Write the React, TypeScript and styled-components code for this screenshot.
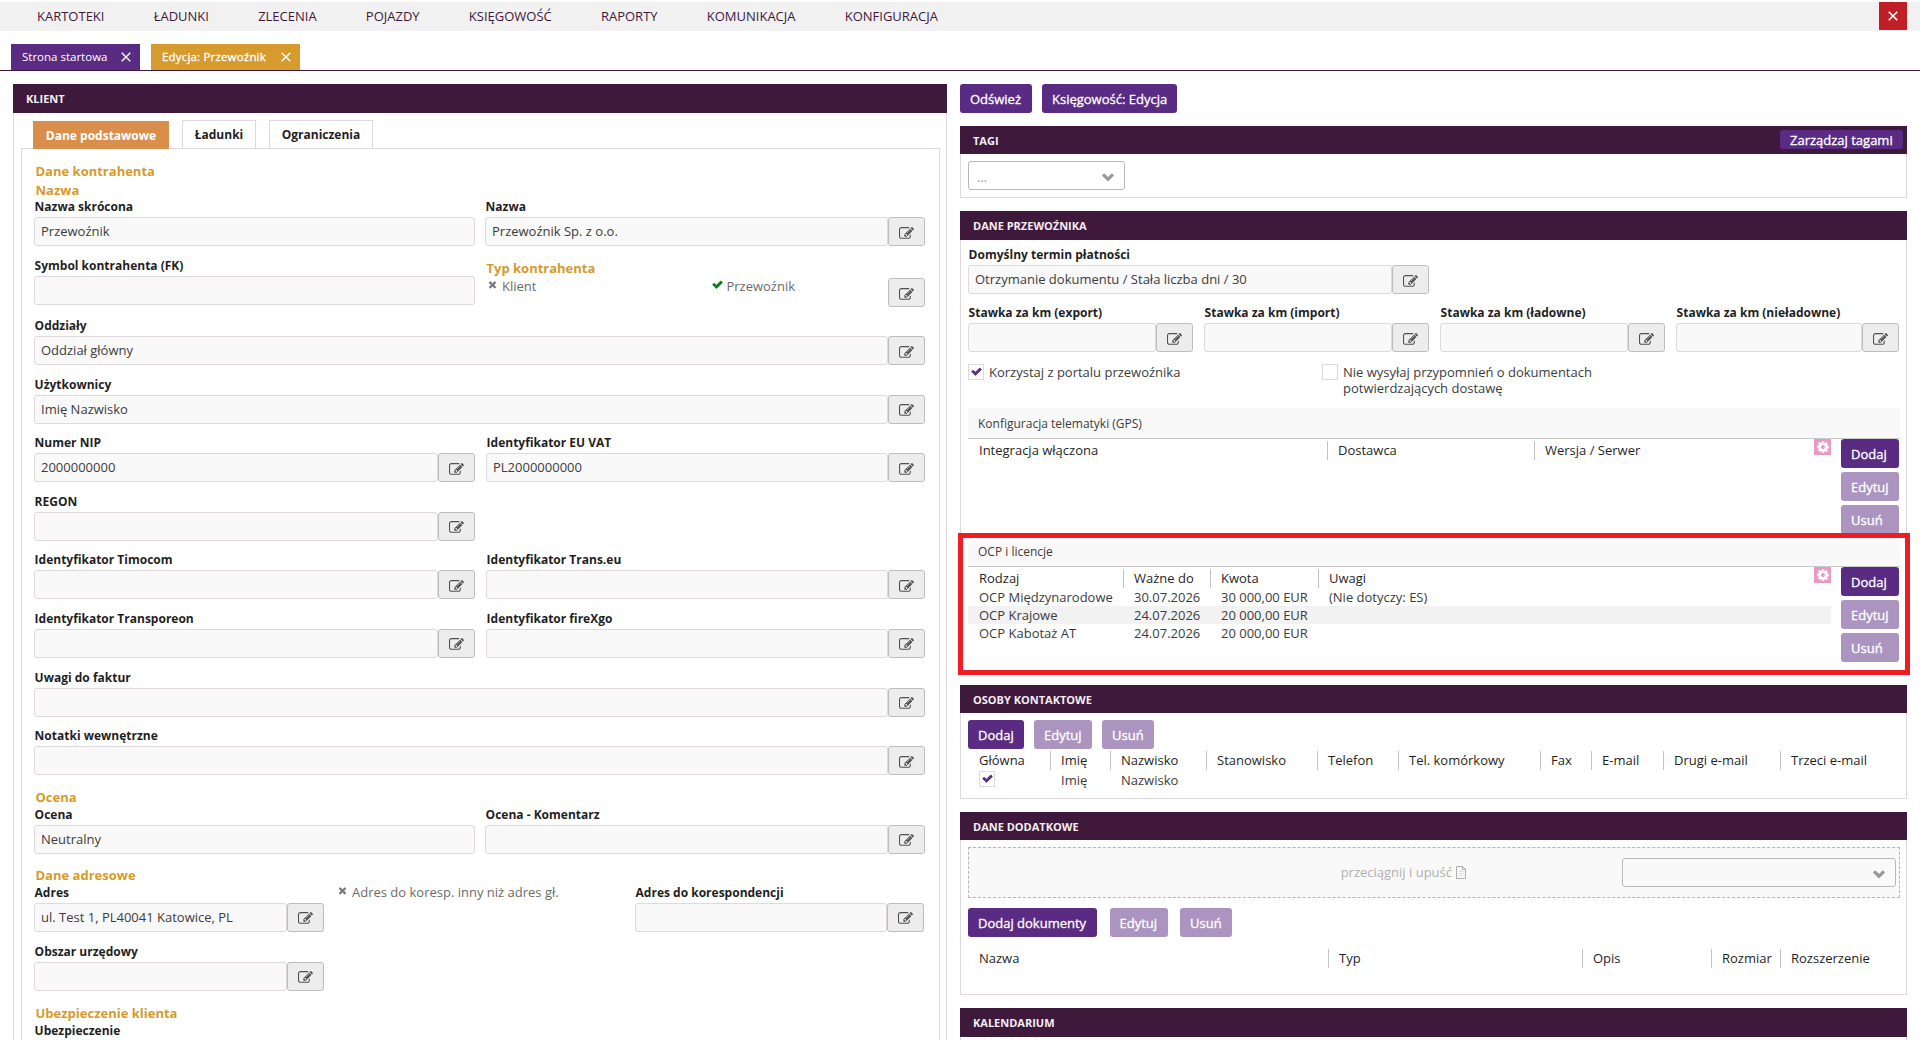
import React from "react";
import styled, { createGlobalStyle, css } from "styled-components";

const color = {
  plum: "#3f193c",
  violet: "#5a2b82",
  violetOff: "#ab95c0",
  gold: "#d69a2d",
  line: "#dfd8dc",
  field: "#f9f9f9",
  text: "#3c3c3c",
  strong: "#1f1f1f",
};

const GlobalStyle = createGlobalStyle`
  * { box-sizing: border-box; }
  body {
    margin: 0;
    background: #fff;
    color: ${color.text};
    font: 13px/18px "Open Sans", "Noto Sans", sans-serif;
  }
  button { font: inherit; border: 0; padding: 0; margin: 0; cursor: pointer; }
`;

/* ---------- icons ---------- */

const paths = {
  edit: "M888 1184l116-116-152-152-116 116v56h96v96h56zm440-720q-16-16-33 1l-350 350q-17 17-1 33t33-1l350-350q17-17 1-33zm80 594v190q0 119-84.5 203.5t-203.5 84.5h-832q-119 0-203.5-84.5t-84.5-203.5v-832q0-119 84.5-203.5t203.5-84.5h832q63 0 117 25 15 7 18 23 3 17-9 29l-49 49q-14 14-32 8-23-6-45-6h-832q-66 0-113 47t-47 113v832q0 66 47 113t113 47h832q66 0 113-47t47-113v-126q0-13 9-22l64-64q15-15 35-7t20 29zm-96-738l288 288-672 672h-288v-288zm444 132l-92 92-288-288 92-92q28-28 68-28t68 28l152 152q28 28 28 68t-28 68z",
  check: "M1671 566q0 40-28 68l-724 724-136 136q-28 28-68 28t-68-28l-136-136-362-362q-28-28-28-68t28-68l136-136q28-28 68-28t68 28l294 295 656-657q28-28 68-28t68 28l136 136q28 28 28 68z",
  times: "M1490 1322q0 40-28 68l-136 136q-28 28-68 28t-68-28l-294-294-294 294q-28 28-68 28t-68-28l-136-136q-28-28-28-68t28-68l294-294-294-294q-28-28-28-68t28-68l136-136q28-28 68-28t68 28l294 294 294-294q28-28 68-28t68 28l136 136q28 28 28 68t-28 68l-294 294 294 294q28 28 28 68z",
  cog: "M1152 896q0-106-75-181t-181-75-181 75-75 181 75 181 181 75 181-75 75-181zm512-109v222q0 12-8 23t-20 13l-185 28q-19 54-39 91 35 50 107 138 10 12 10 25t-9 23q-27 37-99 108t-94 71q-12 0-26-9l-138-108q-44 23-91 38-16 136-29 186-7 28-36 28h-222q-14 0-24.500-8.500t-11.500-21.500l-28-184q-49-16-90-37l-141 107q-10 9-25 9-14 0-25-11-126-114-165-168-7-10-7-23 0-12 8-23 15-21 51-66.500t54-70.500q-27-50-41-99l-183-27q-13-2-21-12.500t-8-23.500v-222q0-12 8-23t19-13l186-28q14-46 39-92-40-57-107-138-10-12-10-24 0-10 9-23 26-36 98.500-107.500t94.500-71.500q13 0 26 10l138 107q44-23 91-38 16-136 29-186 7-28 36-28h222q14 0 24.500 8.500t11.500 21.500l28 184q49 16 90 37l142-107q9-9 24-9 13 0 25 10 129 119 165 170 7 8 7 22 0 12-8 23-15 21-51 66.500t-54 70.500q26 50 41 98l183 28q13 2 21 12.500t8 23.500z",
};

const Glyph = styled.svg`
  display: block;
  flex: none;
  fill: currentColor;
  stroke: currentColor;
`;

const Icon = ({ name, size, weight = 0 }: { name: keyof typeof paths; size: number; weight?: number }) => (
  <Glyph width={size} height={size} viewBox="0 0 1792 1792" strokeWidth={weight}>
    <path d={paths[name]} />
  </Glyph>
);

const LineGlyph = styled.svg`
  display: block;
  flex: none;
  fill: none;
  stroke: currentColor;
`;

const Cross = ({ size, weight = 1.6 }: { size: number; weight?: number }) => (
  <LineGlyph width={size} height={size} viewBox="0 0 10 10" strokeWidth={weight}>
    <path d="M0.7 0.7L9.3 9.3M9.3 0.7L0.7 9.3" />
  </LineGlyph>
);

const Chevron = () => (
  <LineGlyph width="14" height="10" viewBox="0 0 14 10" strokeWidth="3.2">
    <path d="M2 2.300L7 7.200L12 2.300" />
  </LineGlyph>
);

const Sheet = () => (
  <LineGlyph width="10" height="13" viewBox="0 0 10 13" strokeWidth="1">
    <path d="M0.500 0.500H6.500L9.500 3.500V12.500H0.500ZM6.500 0.500V3.500H9.500" />
    <path d="M2.500 5.500H7.500M2.500 7.500H7.500M2.500 9.500H7.500" opacity="0.35" />
  </LineGlyph>
);

/* ---------- page frame ---------- */

const Page = styled.div`
  display: flex;
  flex-direction: column;
  width: 1920px;
  height: 1040px;
  overflow: hidden;
`;

const MenuBar = styled.nav`
  display: flex;
  flex: none;
  justify-content: space-between;
  height: 29px;
  margin-top: 2px;
  padding: 0 13px 0 37px;
  background: #f1f1f1;
  color: ${color.plum};
`;

const MenuItems = styled.div`
  display: flex;
  gap: 49.2px;
  line-height: 28px;
`;

const CloseApp = styled.button`
  display: flex;
  align-items: center;
  justify-content: center;
  width: 28px;
  height: 28px;
  background: #c01f28;
  color: #fff;
`;

const PageTabs = styled.div`
  display: flex;
  flex: none;
  align-items: flex-end;
  gap: 11px;
  height: 40px;
  padding-left: 11px;
  border-bottom: 1px solid ${color.plum};
`;

const PageTab = styled.div<{ $current?: boolean; $width: number }>`
  display: flex;
  align-items: center;
  justify-content: space-between;
  width: ${(p) => p.$width}px;
  height: 26px;
  padding: 0 9px 0 11px;
  background: ${(p) => (p.$current ? color.gold : color.violet)};
  color: #fff;
  font-size: 11.5px;
  ${(p) => p.$current && "letter-spacing: 0.18px; -webkit-text-stroke: 0.3px #fff;"}
`;

const Columns = styled.main`
  display: flex;
  flex: none;
  gap: 13px;
  padding: 13px 0 0 13px;
`;

const Column = styled.div<{ $width: number }>`
  display: flex;
  flex-direction: column;
  gap: 13px;
  width: ${(p) => p.$width}px;
`;

const Panel = styled.section<{ $height: number }>`
  position: relative;
  display: flex;
  flex-direction: column;
  flex: none;
  height: ${(p) => p.$height}px;
`;

const PanelHeader = styled.header<{ $height?: number }>`
  display: flex;
  flex: none;
  align-items: center;
  justify-content: space-between;
  height: ${(p) => p.$height ?? 28}px;
  padding: 1px 4px 0 13px;
  background: ${color.plum};
  color: #f4eef3;
  font-size: 11px;
  font-weight: 700;
  line-height: 28px;
`;

const PanelBody = styled.div<{ $pad?: string }>`
  flex: 1;
  min-height: 0;
  padding: ${(p) => p.$pad ?? "7px 6px 0 7px"};
  border: 1px solid ${color.line};
  border-top: 0;
`;

/* ---------- controls ---------- */

const Button = styled.button<{ $off?: boolean; $width?: number; $height?: number }>`
  width: ${(p) => (p.$width ? p.$width + "px" : "auto")};
  height: ${(p) => p.$height ?? 29}px;
  padding: 1px 0 0 10px;
  border-radius: 3px;
  background: ${(p) => (p.$off ? color.violetOff : color.violet)};
  color: #fff;
  -webkit-text-stroke: 0.3px #fff;
  text-align: left;
  white-space: nowrap;
`;

const HeaderButton = styled(Button)`
  align-self: flex-start;
  margin-top: 3px;
  padding: 0 0 0 10px;
  font-size: 13px;
  font-weight: 400;
  line-height: 18px;
`;

const ButtonRow = styled.div<{ $gap: number }>`
  display: flex;
  gap: ${(p) => p.$gap}px;
`;

const ButtonStack = styled.div`
  display: flex;
  flex-direction: column;
  gap: 4.5px;
`;

const Label = styled.div`
  height: 20px;
  padding-left: 0.6px;
  color: ${color.strong};
  font-size: 12px;
  font-weight: 700;
  line-height: 19px;
  white-space: nowrap;
`;

const FieldBox = styled.div<{ $width: number }>`
  flex: none;
  width: ${(p) => p.$width}px;
`;

const InputLine = styled.div`
  display: flex;
  height: 29px;
`;

const Input = styled.div`
  flex: 1;
  padding: 0 6px;
  border: 1px solid ${color.line};
  border-radius: 3px;
  background: ${color.field};
  line-height: 27px;
  white-space: nowrap;
`;

const EditButton = styled.button`
  display: flex;
  align-items: center;
  justify-content: center;
  width: 37px;
  height: 29px;
  padding-top: 3px;
  border: 1px solid #bdbdbd;
  border-radius: 3px;
  background: #ededed;
  color: #505050;
`;

const Edit = () => (
  <EditButton>
    <Icon name="edit" size={15} />
  </EditButton>
);

type FieldProps = { label: string; value?: string; width: number; edit?: boolean };

const Field = ({ label, value = "", width, edit }: FieldProps) => (
  <FieldBox $width={width}>
    <Label>{label}</Label>
    <InputLine>
      <Input>{value}</Input>
      {edit && <Edit />}
    </InputLine>
  </FieldBox>
);

const Select = styled.div<{ $width: number }>`
  display: flex;
  align-items: center;
  justify-content: space-between;
  width: ${(p) => p.$width}px;
  height: 29px;
  padding: 2px 9px 0 8px;
  border: 1px solid #b9b9b9;
  border-radius: 3px;
  color: #999;
`;

const Checkbox = styled.span`
  display: flex;
  flex: none;
  justify-content: center;
  width: 16px;
  height: 16px;
  padding-top: 1px;
  border: 1px solid ${color.line};
  background: #fff;
  color: ${color.violet};
`;

const CheckLabel = styled.label`
  display: flex;
  gap: 5px;
  width: 354px;
  line-height: 16px;
  span + span { white-space: pre-line; }
`;

/* ---------- client form ---------- */

const InnerTabs = styled.div`
  display: flex;
  align-items: flex-end;
  gap: 13px;
  height: 35px;
  padding-left: 12px;
`;

const InnerTab = styled.div<{ $current?: boolean; $width: number }>`
  width: ${(p) => p.$width}px;
  height: 28px;
  margin-bottom: 0;
  border: 1px solid ${color.line};
  border-bottom: 0;
  color: ${color.strong};
  font-size: 12px;
  font-weight: 700;
  line-height: 27px;
  text-align: center;
  ${(p) =>
    p.$current &&
    css`
      margin-bottom: -1px;
      border: 0;
      background: #d98f4b;
      color: #fff;
      line-height: 29px;
    `}
`;

const Form = styled.div`
  height: 920px;
  padding: 12px 0 0 12px;
  border: 1px solid ${color.line};
`;

const SectionTitle = styled.div<{ $height?: number; $top?: number }>`
  height: ${(p) => p.$height ?? 17.5}px;
  margin-top: ${(p) => p.$top ?? 0}px;
  padding-left: 1.5px;
  color: ${color.gold};
  font-weight: 700;
  line-height: 20px;
`;

const Row = styled.div<{ $height?: number; $gap?: number }>`
  display: flex;
  gap: ${(p) => p.$gap ?? 10}px;
  height: ${(p) => p.$height ?? 58.6}px;
`;

const TypeBlock = styled.div`
  display: flex;
  justify-content: space-between;
  flex: none;
  width: 440px;
  padding-top: 2px;
`;

const TypeFlags = styled.div`
  display: flex;
  gap: 176px;
  padding-left: 2px;
`;

const Flag = styled.div<{ $width?: number; $on?: boolean }>`
  display: flex;
  gap: ${(p) => (p.$on ? 3 : 4)}px;
  width: ${(p) => (p.$width ? p.$width + "px" : "auto")};
  color: #6b6b6b;
  white-space: nowrap;
  svg { margin-top: 2px; color: ${(p) => (p.$on ? "#0a7a12" : "#7a7a7a")}; }
`;

const TypeEdit = styled.div`
  padding-top: 20px;
`;

/* ---------- grids ---------- */

const GridTitle = styled.div<{ $height: number; $top?: number }>`
  height: ${(p) => p.$height}px;
  margin-top: ${(p) => p.$top ?? 0}px;
  padding-left: 10px;
  border-bottom: 1px solid #c9c9c9;
  background: ${color.field};
  font-size: 12px;
  line-height: ${(p) => p.$height}px;
`;

const GridArea = styled.div<{ $height: number }>`
  display: flex;
  justify-content: space-between;
  height: ${(p) => p.$height}px;
  padding-right: 1px;
`;

const GridMain = styled.div`
  position: relative;
  width: 863px;
  padding-top: 2px;
`;

const GridRow = styled.div<{ $columns: string; $stripe?: boolean }>`
  display: grid;
  grid-template-columns: ${(p) => p.$columns};
  height: 18px;
  padding-left: 1px;
  background: ${(p) => (p.$stripe ? "#f2f2f2" : "transparent")};
  white-space: nowrap;
  line-height: 18px;
`;

const GridHead = styled(GridRow)`
  height: 19px;
  color: ${color.strong};
  line-height: 19px;
`;

const Cell = styled.div`
  padding-left: 11px;
  &:first-child { padding-left: 10px; }
`;

const HeadCell = styled(Cell)`
  padding-left: 10px;
  &:not(:first-child) { border-left: 1px solid #c4c4c4; }
`;

const GridSettings = styled.button`
  position: absolute;
  top: 0;
  right: 0;
  display: flex;
  justify-content: center;
  width: 17px;
  height: 16px;
  padding-top: 1px;
  background: #e79ac6;
  color: #fff;
`;

const Highlight = styled.div`
  position: absolute;
  left: -2px;
  top: 322px;
  width: 952px;
  height: 142px;
  border: 5px solid #ee1c24;
`;

const DropZone = styled.div`
  display: flex;
  align-items: center;
  justify-content: flex-end;
  gap: 156px;
  height: 51px;
  margin-bottom: 10px;
  padding-right: 3px;
  border: 1px dashed #b5b5b5;
  background: ${color.field};
`;

const DropHint = styled.div`
  display: flex;
  align-items: center;
  gap: 4px;
  margin-top: -1px;
  color: #b0b0b0;
`;

const Spacer = styled.div<{ $height: number }>`
  height: ${(p) => p.$height}px;
`;

const Head = ({ columns, names }: { columns: string; names: string[] }) => (
  <GridHead $columns={columns}>
    {names.map((n) => (
      <HeadCell key={n}>{n}</HeadCell>
    ))}
  </GridHead>
);

const RowActions = () => (
  <ButtonStack>
    <Button $width={58} $height={28.5}>Dodaj</Button>
    <Button $width={58} $height={28.5} $off>Edytuj</Button>
    <Button $width={58} $height={28.5} $off>Usuń</Button>
  </ButtonStack>
);

const Settings = () => (
  <GridSettings>
    <Icon name="cog" size={14} />
  </GridSettings>
);

const menu = ["KARTOTEKI", "ŁADUNKI", "ZLECENIA", "POJAZDY", "KSIĘGOWOŚĆ", "RAPORTY", "KOMUNIKACJA", "KONFIGURACJA"];

const telematicsColumns = "358px 207px 1fr";
const licenceColumns = "154px 87px 108px 1fr";
const contactColumns = "81px 60px 96px 111px 81px 142px 51px 72px 117px 1fr";
const documentColumns = "359px 254px 129px 69px 1fr";

const licences = [
  ["OCP Międzynarodowe", "30.07.2026", "30 000,00 EUR", "(Nie dotyczy: ES)"],
  ["OCP Krajowe", "24.07.2026", "20 000,00 EUR", ""],
  ["OCP Kabotaż AT", "24.07.2026", "20 000,00 EUR", ""],
];

const ClientPanel = () => (
  <Panel $height={980}>
    <PanelHeader $height={29}>KLIENT</PanelHeader>
    <PanelBody $pad="0 6px 0 7px">
      <InnerTabs>
        <InnerTab $current $width={136}>Dane podstawowe</InnerTab>
        <InnerTab $width={74}>Ładunki</InnerTab>
        <InnerTab $width={104}>Ograniczenia</InnerTab>
      </InnerTabs>
      <Form>
        <SectionTitle $height={19}>Dane kontrahenta</SectionTitle>
        <SectionTitle $height={17}>Nazwa</SectionTitle>
        <Row $height={59}>
          <Field label="Nazwa skrócona" value="Przewoźnik" width={441} />
          <Field label="Nazwa" value="Przewoźnik Sp. z o.o." width={440} edit />
        </Row>
        <Row $height={60}>
          <Field label="Symbol kontrahenta (FK)" width={441} />
          <TypeBlock>
            <div>
              <SectionTitle $height={19}>Typ kontrahenta</SectionTitle>
              <TypeFlags>
                <Flag>
                  <Icon name="times" size={11} />
                  Klient
                </Flag>
                <Flag $on>
                  <Icon name="check" size={11} weight={120} />
                  Przewoźnik
                </Flag>
              </TypeFlags>
            </div>
            <TypeEdit>
              <Edit />
            </TypeEdit>
          </TypeBlock>
        </Row>
        <Row><Field label="Oddziały" value="Oddział główny" width={891} edit /></Row>
        <Row><Field label="Użytkownicy" value="Imię Nazwisko" width={891} edit /></Row>
        <Row $gap={11}>
          <Field label="Numer NIP" value="2000000000" width={441} edit />
          <Field label="Identyfikator EU VAT" value="PL2000000000" width={439} edit />
        </Row>
        <Row><Field label="REGON" width={441} edit /></Row>
        <Row $gap={11}>
          <Field label="Identyfikator Timocom" width={441} edit />
          <Field label="Identyfikator Trans.eu" width={439} edit />
        </Row>
        <Row $gap={11}>
          <Field label="Identyfikator Transporeon" width={441} edit />
          <Field label="Identyfikator fireXgo" width={439} edit />
        </Row>
        <Row><Field label="Uwagi do faktur" width={891} edit /></Row>
        <Row><Field label="Notatki wewnętrzne" width={891} edit /></Row>
        <SectionTitle $top={2.7}>Ocena</SectionTitle>
        <Row>
          <Field label="Ocena" value="Neutralny" width={441} />
          <Field label="Ocena - Komentarz" width={440} edit />
        </Row>
        <SectionTitle $top={1.9}>Dane adresowe</SectionTitle>
        <Row $gap={13}>
          <Field label="Adres" value="ul. Test 1, PL40041 Katowice, PL" width={290} edit />
          <Flag $width={285}>
            <Icon name="times" size={11} />
            Adres do koresp. inny niż adres gł.
          </Flag>
          <Field label="Adres do korespondencji" width={289} edit />
        </Row>
        <Row><Field label="Obszar urzędowy" width={290} edit /></Row>
        <SectionTitle $top={3}>Ubezpieczenie klienta</SectionTitle>
        <Label>Ubezpieczenie</Label>
      </Form>
    </PanelBody>
  </Panel>
);

const CarrierPanel = () => (
  <Panel $height={461}>
    <PanelHeader $height={29}>DANE PRZEWOŹNIKA</PanelHeader>
    <PanelBody $pad="5px 6px 0 7px">
      <Row $height={58}>
        <Field label="Domyślny termin płatności" value="Otrzymanie dokumentu / Stała liczba dni / 30" width={461} edit />
      </Row>
      <Row $height={61} $gap={11}>
        <Field label="Stawka za km (export)" width={225} edit />
        <Field label="Stawka za km (import)" width={225} edit />
        <Field label="Stawka za km (ładowne)" width={225} edit />
        <Field label="Stawka za km (nieładowne)" width={223} edit />
      </Row>
      <Row $height={44} $gap={0}>
        <CheckLabel>
          <Checkbox><Icon name="check" size={11} weight={120} /></Checkbox>
          <span>Korzystaj z portalu przewoźnika</span>
        </CheckLabel>
        <CheckLabel>
          <Checkbox />
          <span>{"Nie wysyłaj przypomnień o dokumentach\npotwierdzających dostawę"}</span>
        </CheckLabel>
      </Row>
      <GridTitle $height={31}>Konfiguracja telematyki (GPS)</GridTitle>
      <GridArea $height={98}>
        <GridMain>
          <Head columns={telematicsColumns} names={["Integracja włączona", "Dostawca", "Wersja / Serwer"]} />
          <Settings />
        </GridMain>
        <RowActions />
      </GridArea>
      <GridTitle $height={30}>OCP i licencje</GridTitle>
      <GridArea $height={98}>
        <GridMain>
          <Head columns={licenceColumns} names={["Rodzaj", "Ważne do", "Kwota", "Uwagi"]} />
          {licences.map((cells, i) => (
            <GridRow key={i} $columns={licenceColumns} $stripe={i % 2 === 1}>
              {cells.map((c, j) => (
                <Cell key={j}>{c}</Cell>
              ))}
            </GridRow>
          ))}
          <Settings />
        </GridMain>
        <RowActions />
      </GridArea>
    </PanelBody>
    <Highlight />
  </Panel>
);

const ContactsPanel = () => (
  <Panel $height={114}>
    <PanelHeader>OSOBY KONTAKTOWE</PanelHeader>
    <PanelBody>
      <ButtonRow $gap={10}>
        <Button $width={56}>Dodaj</Button>
        <Button $width={58} $off>Edytuj</Button>
        <Button $width={52} $off>Usuń</Button>
      </ButtonRow>
      <Spacer $height={2} />
      <Head
        columns={contactColumns}
        names={["Główna", "Imię", "Nazwisko", "Stanowisko", "Telefon", "Tel. komórkowy", "Fax", "E-mail", "Drugi e-mail", "Trzeci e-mail"]}
      />
      <Spacer $height={1} />
      <GridRow $columns={contactColumns}>
        <Cell><Checkbox><Icon name="check" size={11} weight={120} /></Checkbox></Cell>
        <Cell>Imię</Cell>
        <Cell>Nazwisko</Cell>
      </GridRow>
    </PanelBody>
  </Panel>
);

const DocumentsPanel = () => (
  <Panel $height={183}>
    <PanelHeader>DANE DODATKOWE</PanelHeader>
    <PanelBody>
      <DropZone>
        <DropHint>przeciągnij i upuść <Sheet /></DropHint>
        <Select $width={274}>
          <span />
          <Chevron />
        </Select>
      </DropZone>
      <ButtonRow $gap={12.5}>
        <Button $width={129}>Dodaj dokumenty</Button>
        <Button $width={58} $off>Edytuj</Button>
        <Button $width={52} $off>Usuń</Button>
      </ButtonRow>
      <Spacer $height={12} />
      <Head columns={documentColumns} names={["Nazwa", "Typ", "Opis", "Rozmiar", "Rozszerzenie"]} />
    </PanelBody>
  </Panel>
);

export default function App() {
  return (
    <Page>
      <GlobalStyle />
      <MenuBar>
        <MenuItems>
          {menu.map((m) => (
            <span key={m}>{m}</span>
          ))}
        </MenuItems>
        <CloseApp><Cross size={10} /></CloseApp>
      </MenuBar>
      <PageTabs>
        <PageTab $width={129}>Strona startowa<Cross size={10} weight={1.4} /></PageTab>
        <PageTab $width={149} $current>Edycja: Przewoźnik<Cross size={10} weight={1.4} /></PageTab>
      </PageTabs>
      <Columns>
        <Column $width={934}>
          <ClientPanel />
        </Column>
        <Column $width={947}>
          <ButtonRow $gap={10}>
            <Button $width={72}>Odśwież</Button>
            <Button $width={135}>Księgowość: Edycja</Button>
          </ButtonRow>
          <Panel $height={72}>
            <PanelHeader>
              TAGI
              <HeaderButton $width={123} $height={19}>Zarządzaj tagami</HeaderButton>
            </PanelHeader>
            <PanelBody>
              <Select $width={157}>
                <span>...</span>
                <Chevron />
              </Select>
            </PanelBody>
          </Panel>
          <CarrierPanel />
          <ContactsPanel />
          <DocumentsPanel />
          <Panel $height={80}>
            <PanelHeader $height={29}>KALENDARIUM</PanelHeader>
            <PanelBody />
          </Panel>
        </Column>
      </Columns>
    </Page>
  );
}
